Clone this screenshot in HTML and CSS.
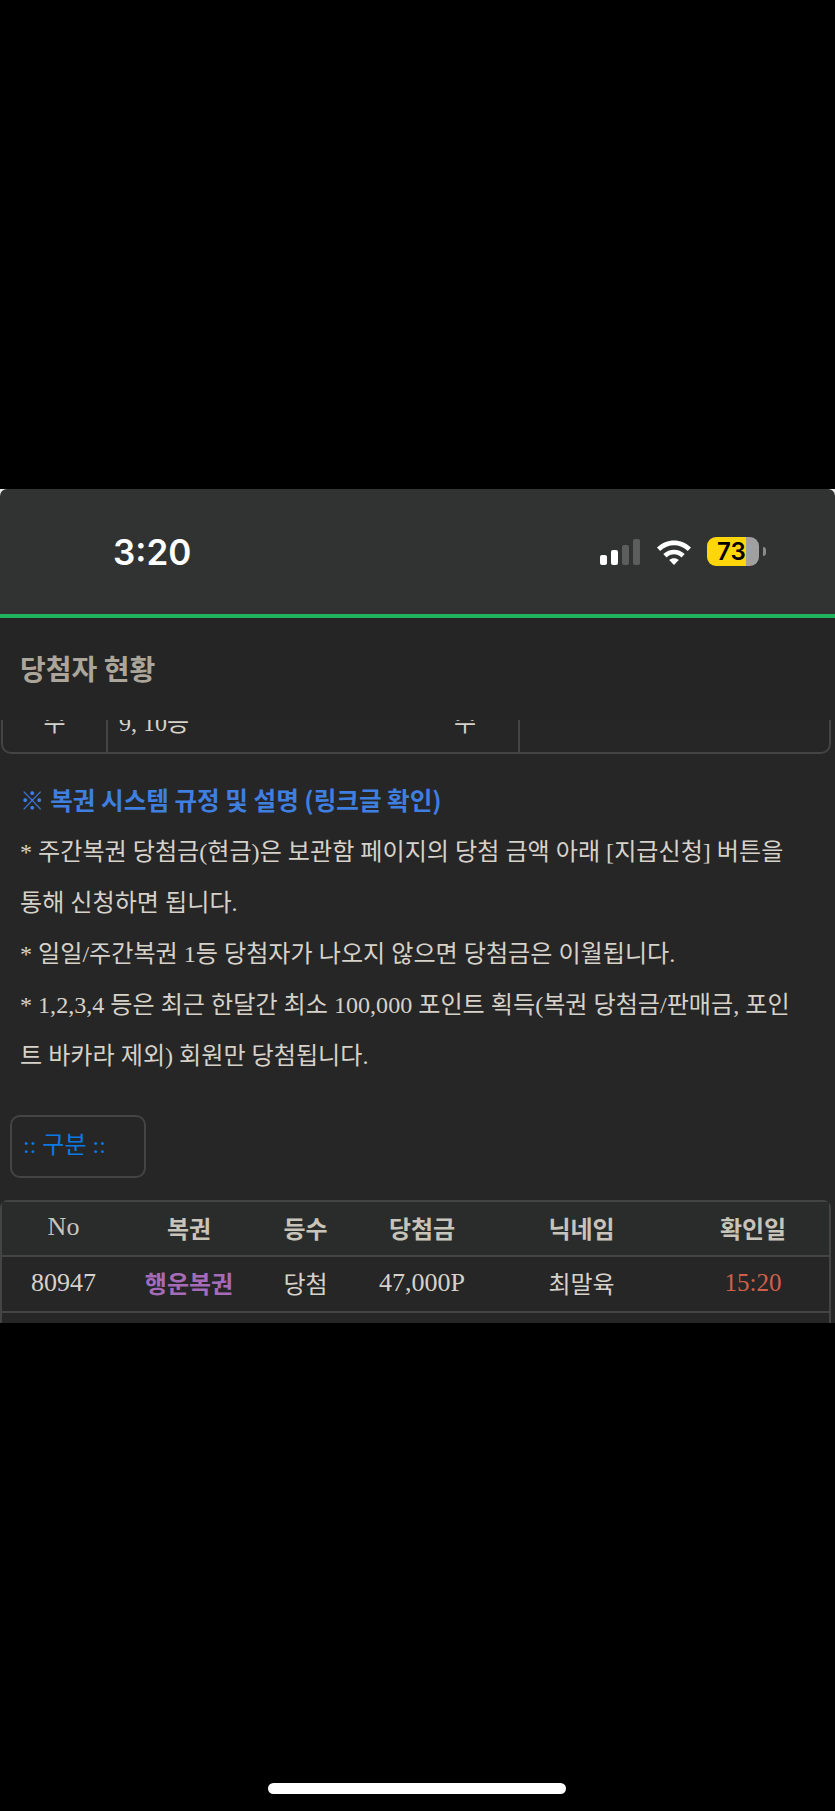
FILE: index.html
```html
<!DOCTYPE html>
<html>
<head>
  <meta charset="UTF-8">
  <title>당첨자 현황</title>
  <link rel="stylesheet" href="styles.css">
</head>
<body>
  <div class="screen">
    <div class="status-bar">
      <div class="status-time">3:20</div>
      <div class="status-icons">
        <div class="signal">
          <span class="bar bar-1"></span>
          <span class="bar bar-2"></span>
          <span class="bar bar-3 off"></span>
          <span class="bar bar-4 off"></span>
        </div>
        <svg class="wifi" width="36" height="26" viewBox="0 0 36 26">
          <path d="M1 8.5C10.500 -1 25.500 -1 35 8.500L31.800 12C24 4.300 12 4.300 4.200 12Z" fill="#fff"/>
          <path d="M7.300 15C13.400 9.200 22.600 9.200 28.700 15L25.500 18.400C21 14.300 15 14.300 10.500 18.400Z" fill="#fff"/>
          <path d="M13.200 21C16 18.500 20 18.500 22.800 21L18 26Z" fill="#fff"/>
        </svg>
        <div class="battery">
          <div class="battery-body"><span class="battery-level">73</span></div>
          <span class="battery-nub"></span>
        </div>
      </div>
    </div>

    <div class="page-header">당첨자 현황</div>

    <div class="content">
      <div class="clip">
        <table class="rule-table">
          <tr>
            <td class="col-a">수</td>
            <td class="col-b">9, 10등</td>
            <td class="col-c">수</td>
            <td></td>
          </tr>
        </table>
      </div>

      <div class="notice">
        <div class="notice-title">※ 복권 시스템 규정 및 설명 (링크글 확인)</div>
        <p>* 주간복권 당첨금(현금)은 보관함 페이지의 당첨 금액 아래 [지급신청] 버튼을 통해 신청하면 됩니다.</p>
        <p>* 일일/주간복권 1등 당첨자가 나오지 않으면 당첨금은 이월됩니다.</p>
        <p>* 1,2,3,4 등은 최근 한달간 최소 100,000 포인트 획득(복권 당첨금/판매금, 포인트 바카라 제외) 회원만 당첨됩니다.</p>
      </div>

      <div class="filter-box">:: 구분 ::</div>

      <table class="winner-table">
        <tr>
          <th class="w-no num">No</th>
          <th class="w-type">복권</th>
          <th class="w-rank">등수</th>
          <th class="w-prize">당첨금</th>
          <th class="w-nick">닉네임</th>
          <th class="w-date">확인일</th>
        </tr>
        <tr>
          <td class="num">80947</td>
          <td class="lucky">행운복권</td>
          <td>당첨</td>
          <td class="num">47,000P</td>
          <td>최말육</td>
          <td class="time num">15:20</td>
        </tr>
        <tr>
          <td colspan="6"></td>
        </tr>
      </table>
    </div>
  </div>

  <div class="home-bar"></div>
</body>
</html>
```

FILE: styles.css
```css
html, body {
  margin: 0;
  padding: 0;
  background-color: #000;
}

body {
  font-family: "Liberation Serif", "Noto Sans CJK KR", serif;
  font-size: 24px;
  color: #d6d2ca;
  height: 1811px;
  overflow: hidden;
}

.screen {
  margin-top: 489px;
  height: 834px;
  overflow: hidden;
  background: linear-gradient(#e8e8e8 10px, #262626 10px);
}

/* status bar */
.status-bar {
  height: 125px;
  background-color: #303332;
  border-bottom: 4px solid #20b45c;
  border-radius: 7px 7px 0 0;
  display: flex;
  justify-content: space-between;
  align-items: center;
  padding: 0 69px 0 113px;
}

.status-time {
  font-family: Inter, sans-serif;
  font-size: 35px;
  font-weight: 600;
  color: #fff;
  margin-top: 1px;
}

.status-icons {
  display: flex;
  align-items: center;
  gap: 15px;
}

.signal {
  display: flex;
  align-items: flex-end;
  gap: 4px;
  height: 26px;
  margin-right: 1px;
}

.bar {
  width: 7px;
  background-color: #fff;
  border-radius: 2px;
}

.bar-1 { height: 10px; }
.bar-2 { height: 15px; }
.bar-3 { height: 20px; }
.bar-4 { height: 26px; }

.bar.off {
  background-color: #5c5e5d;
}

.battery {
  display: flex;
  align-items: center;
  gap: 4px;
}

.battery-body {
  width: 52px;
  height: 29px;
  border-radius: 9px;
  background: linear-gradient(to right, #ffd60a 39px, #a0a0a0 39px);
  display: flex;
  align-items: center;
  padding-left: 10px;
  box-sizing: border-box;
}

.battery-level {
  font-family: Inter, sans-serif;
  font-size: 24px;
  font-weight: 600;
  color: #000;
}

.battery-nub {
  width: 3px;
  height: 9px;
  background-color: #8a8a8a;
  border-radius: 0 3px 3px 0;
}

/* header */
.page-header {
  height: 102px;
  line-height: 100px;
  padding-left: 20px;
  font-family: "Noto Sans CJK KR", sans-serif;
  font-size: 28px;
  font-weight: 700;
  color: #aca59a;
  background-color: #252525;
}

/* clipped table at the top of the scroll area */
.clip {
  height: 34px;
  overflow: hidden;
}

.rule-table {
  width: 830px;
  margin: -23px 0 0 1px;
  table-layout: fixed;
  border-collapse: separate;
  border-spacing: 0;
  border: 2px solid #444;
  border-radius: 10px;
}

.rule-table td {
  height: 53px;
  padding: 0 0 11px;
  box-sizing: border-box;
}

.rule-table .col-a {
  width: 105px;
  text-align: center;
  border-right: 2px solid #444;
}

.rule-table .col-b {
  width: 304px;
  padding-left: 11px;
}

.rule-table .col-c {
  width: 108px;
  text-align: center;
  border-right: 2px solid #444;
}

/* notice text */
.notice {
  padding: 20px 30px 0 20px;
  font-size: 24.1px;
  line-height: 51px;
}

.notice p {
  margin: 0;
}

.notice-title {
  color: #3f7fe0;
  font-family: "Noto Sans CJK KR", sans-serif;
  font-size: 24.6px;
  font-weight: 700;
  line-height: 51px;
  margin-bottom: 2px;
}

/* filter box */
.filter-box {
  width: 136px;
  height: 63px;
  box-sizing: border-box;
  margin: 33px 0 0 10px;
  padding-left: 11px;
  line-height: 57px;
  border: 2px solid #444;
  border-radius: 10px;
  color: #0a7be6;
}

/* winners */
.winner-table {
  width: 831px;
  margin: 22px 0 0 0;
  table-layout: fixed;
  border-collapse: separate;
  border-spacing: 0;
  border: 2px solid #444;
  border-bottom: none;
  border-radius: 8px 8px 0 0;
}

.winner-table th,
.winner-table td {
  box-sizing: border-box;
  padding: 0 0 3px;
  text-align: center;
  font-weight: normal;
  border-bottom: 2px solid #444;
}

.winner-table th {
  height: 55px;
  background-color: #2a2c2c;
  color: #c8c4ba;
  font-weight: 700;
}

.winner-table td {
  height: 56px;
}

.winner-table .num {
  font-size: 26px;
  font-weight: normal;
}

.w-no { width: 123px; }
.w-type { width: 128px; }
.w-rank { width: 105px; }
.w-prize { width: 128px; }
.w-nick { width: 191px; }

.winner-table .lucky {
  color: #a66bb8;
  font-weight: 700;
}

.winner-table .time {
  font-size: 25px;
  color: #d0604a;
}

.home-bar {
  width: 298px;
  height: 11px;
  margin: 460px 0 0 268px;
  border-radius: 6px;
  background-color: #fff;
}
```
